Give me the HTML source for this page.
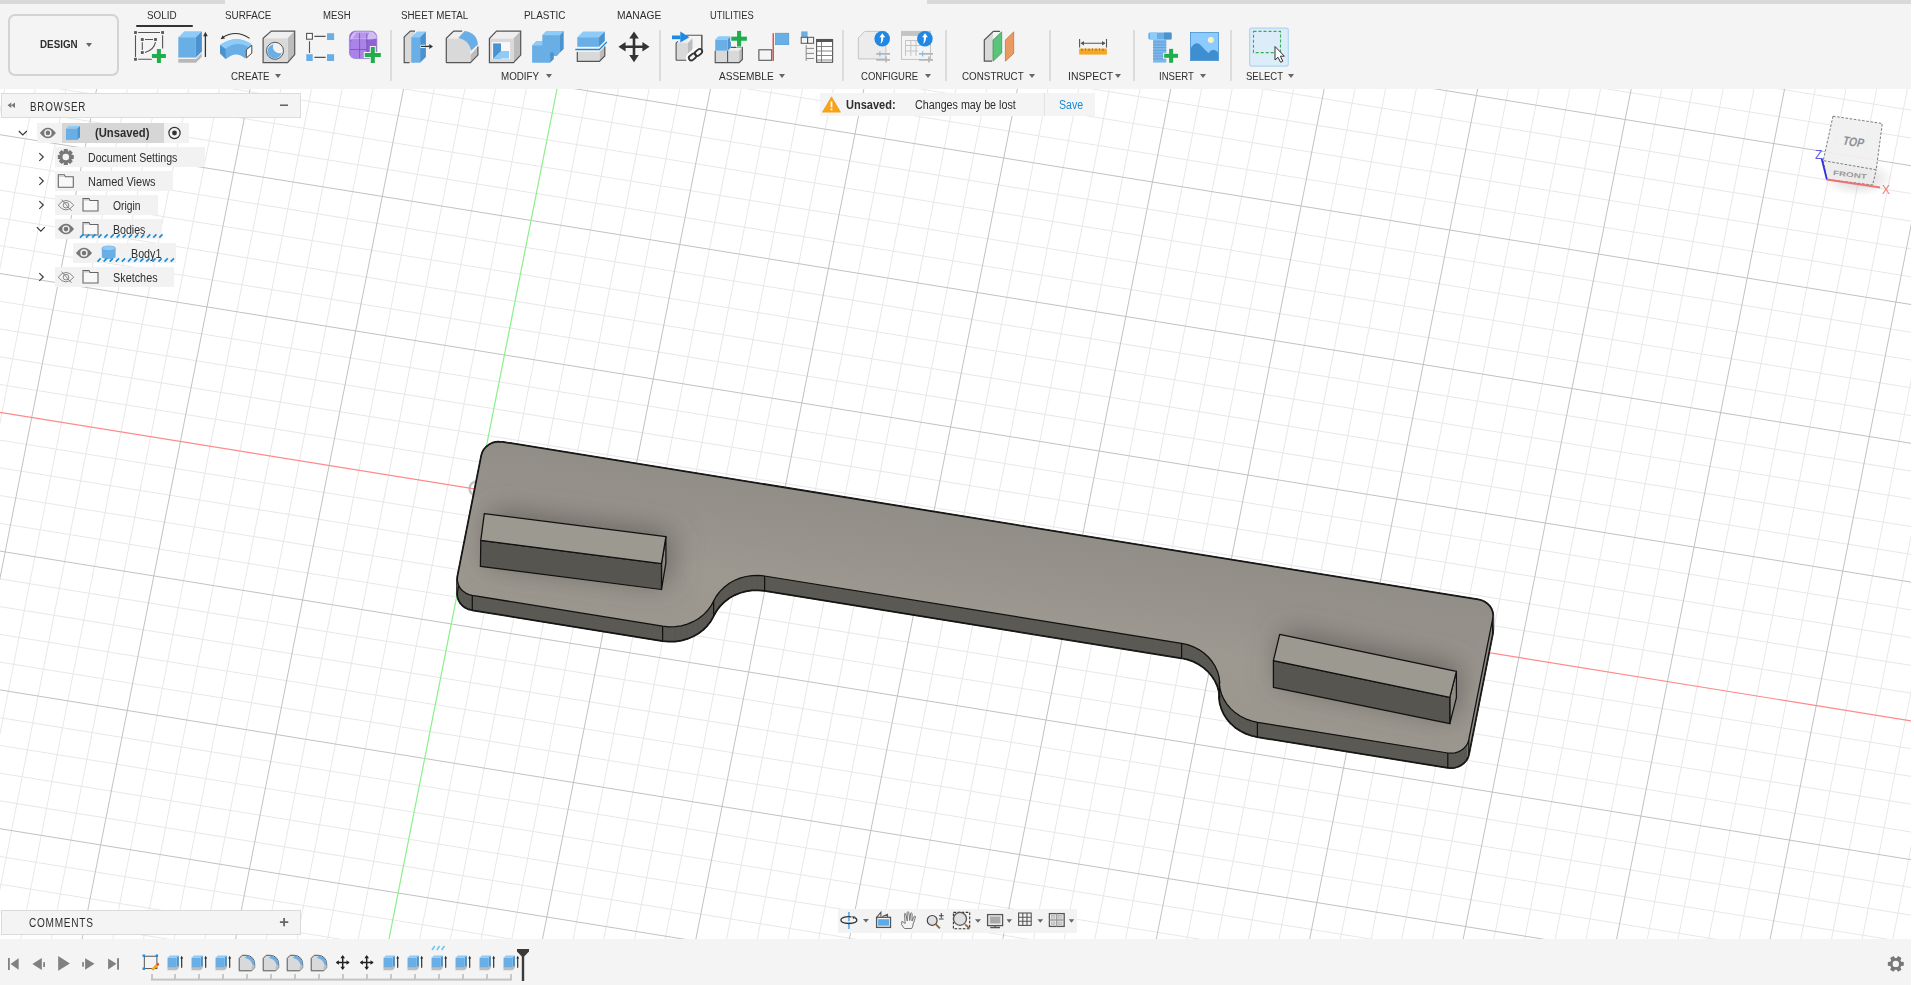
<!DOCTYPE html>
<html><head><meta charset="utf-8"><title>Fusion</title>
<style>
*{box-sizing:border-box;margin:0;padding:0}
html,body{width:1914px;height:985px;overflow:hidden;background:#fff;font-family:"Liberation Sans",sans-serif;color:#333;position:relative}
#vp{position:absolute;left:0;top:0;width:1911px;height:985px}
.abs{position:absolute}
.t{position:absolute;white-space:nowrap}
.tri{position:absolute;width:0;height:0;border-left:3px solid transparent;border-right:3px solid transparent;border-top:4px solid #666}
#topstrip1{left:0;top:0;width:225px;height:4px;background:#d9d9d9}
#topstrip2{left:927px;top:0;width:984px;height:4px;background:#d9d9d9}
#toolbar{left:0;top:0;width:1911px;height:89px;background:#f4f4f4}
#design{left:8.2px;top:14px;width:110.6px;height:61.6px;border:2px solid #d3d3d3;border-radius:7px}
#tabline{left:135.5px;top:25px;width:57px;height:2px;background:#333;border-radius:1px}
.sep{position:absolute;top:30px;width:2px;height:51px;background:#dcdcdc}
#brhead{left:1px;top:92.8px;width:300px;height:25px;background:#f4f4f4;border:1px solid #dcdcdc}
.row{position:absolute;height:19.5px;background:#f2f2f2}
#r1sel{left:62px;top:123.2px;width:102px;height:19.5px;background:#d6d6d6}
#unsaved{left:820px;top:93.3px;width:275px;height:23.2px;background:#f4f4f4}
#unsep{left:1044.3px;top:93.3px;width:1px;height:23.2px;background:#e2e2e2}
#comments{left:1px;top:910px;width:300px;height:24.5px;background:#f4f4f4;border:1px solid #dadada}
#nav{left:838px;top:909.2px;width:239px;height:23.4px;background:#f3f3f3}
#tl{left:0;top:939px;width:1911px;height:46px;background:#f4f4f4}

</style></head><body>
<div id="vp"><svg width="1911" height="985" viewBox="0 0 1911 985" style="position:absolute;left:0;top:0">
<defs>
<linearGradient id="topg" gradientUnits="userSpaceOnUse" x1="990.3" y1="520.9" x2="965.4" y2="675.1">
<stop offset="0" stop-color="#918e87"/><stop offset="0.35" stop-color="#98948d"/><stop offset="0.62" stop-color="#9d9991"/><stop offset="1" stop-color="#9b978f"/>
</linearGradient>
<linearGradient id="sideg" x1="0" y1="0" x2="0" y2="1">
<stop offset="0" stop-color="#5c5a54"/><stop offset="1" stop-color="#57554f"/>
</linearGradient>
<radialGradient id="ao" cx="0.5" cy="0.5" r="0.5">
<stop offset="0" stop-color="#76736c" stop-opacity="0.45"/><stop offset="1" stop-color="#6e6b65" stop-opacity="0"/>
</radialGradient>
<filter id="blur" x="-50%" y="-50%" width="200%" height="200%"><feGaussianBlur stdDeviation="15"/></filter>
<clipPath id="topclip"><path d="M481.5 455.4L482.5 452.3L484.1 449.4L486.3 446.9L489.0 444.8L492.1 443.2L495.5 442.2L499.0 441.9L502.6 442.1L1478.1 599.7L1481.5 600.5L1484.7 602.0L1487.5 604.0L1489.8 606.4L1491.5 609.2L1492.6 612.3L1493.0 615.5L1492.7 618.7L1468.8 739.7L1467.9 742.8L1466.2 745.7L1464.0 748.2L1461.3 750.3L1458.2 751.9L1454.9 752.9L1451.3 753.2L1447.8 753.0L1257.4 722.3L1251.4 720.9L1245.6 718.8L1240.1 716.0L1235.1 712.6L1230.7 708.6L1226.9 704.1L1223.8 699.2L1221.5 693.9L1219.9 688.5L1219.2 682.8L1219.8 682.8L1219.1 677.2L1217.6 671.7L1215.2 666.4L1212.1 661.5L1208.3 657.0L1203.9 653.0L1198.9 649.6L1193.5 646.8L1187.6 644.7L1181.6 643.4L764.6 576.0L758.4 575.4L752.1 575.6L745.9 576.5L739.9 578.1L734.2 580.5L729.0 583.5L724.2 587.2L720.0 591.4L716.4 596.0L713.6 601.1L713.6 601.1L710.8 606.2L707.3 610.8L703.1 615.1L698.3 618.7L693.0 621.7L687.3 624.1L681.3 625.8L675.1 626.7L668.8 626.8L662.6 626.2L472.3 595.4L468.9 594.6L465.7 593.1L462.9 591.1L460.6 588.7L458.9 585.9L457.8 582.8L457.3 579.6L457.6 576.4Z"/></clipPath>
<clipPath id="vclip"><rect x="0" y="89" width="1911" height="850"/></clipPath>
</defs>
<g clip-path="url(#vclip)">
<path d="M-26.1 89L-194.1 939M4.6 89L-163.4 939M35.3 89L-132.7 939M66.0 89L-102.0 939M127.3 89L-40.6 939M158.0 89L-9.9 939M188.7 89L20.8 939M219.4 89L51.4 939M280.8 89L112.8 939M311.5 89L143.5 939M342.2 89L174.2 939M372.9 89L204.9 939M434.2 89L266.3 939M464.9 89L297.0 939M495.6 89L327.7 939M526.3 89L358.3 939M587.7 89L419.7 939M618.4 89L450.4 939M649.1 89L481.1 939M679.8 89L511.8 939M741.1 89L573.2 939M771.8 89L603.9 939M802.5 89L634.6 939M833.2 89L665.2 939M894.6 89L726.6 939M925.3 89L757.3 939M956.0 89L788.0 939M986.7 89L818.7 939M1048.0 89L880.1 939M1078.7 89L910.8 939M1109.4 89L941.5 939M1140.1 89L972.2 939M1201.5 89L1033.5 939M1232.2 89L1064.2 939M1262.9 89L1094.9 939M1293.6 89L1125.6 939M1354.9 89L1187.0 939M1385.6 89L1217.7 939M1416.3 89L1248.4 939M1447.0 89L1279.0 939M1508.4 89L1340.4 939M1539.1 89L1371.1 939M1569.8 89L1401.8 939M1600.5 89L1432.5 939M1661.8 89L1493.9 939M1692.5 89L1524.6 939M1723.2 89L1555.3 939M1753.9 89L1586.0 939M1815.3 89L1647.3 939M1846.0 89L1678.0 939M1876.7 89L1708.7 939M1907.4 89L1739.4 939M1968.7 89L1800.8 939M1999.4 89L1831.5 939M2030.1 89L1862.2 939M2060.8 89L1892.9 939M2122.2 89L1954.2 939M0 995.3L1911 1303.9M0 939.7L1911 1248.4M0 912.0L1911 1220.6M0 884.2L1911 1192.8M0 856.5L1911 1165.1M0 800.9L1911 1109.6M0 773.2L1911 1081.8M0 745.4L1911 1054.0M0 717.7L1911 1026.3M0 662.1L1911 970.8M0 634.4L1911 943.0M0 606.6L1911 915.2M0 578.9L1911 887.5M0 523.3L1911 832.0M0 495.6L1911 804.2M0 467.8L1911 776.4M0 440.1L1911 748.7M0 384.5L1911 693.2M0 356.8L1911 665.4M0 329.0L1911 637.6M0 301.3L1911 609.9M0 245.7L1911 554.4M0 218.0L1911 526.6M0 190.2L1911 498.8M0 162.5L1911 471.1M0 106.9L1911 415.6M0 79.2L1911 387.8M0 51.4L1911 360.0M0 23.7L1911 332.3M0 -31.9L1911 276.8M0 -59.6L1911 249.0M0 -87.4L1911 221.2M0 -115.1L1911 193.5M0 -170.7L1911 138.0M0 -198.4L1911 110.2M0 -226.2L1911 82.4M0 -253.9L1911 54.7" stroke="#e8e8e8" stroke-width="1" fill="none"/>
<path d="M-56.8 89L-224.8 939M96.6 89L-71.3 939M250.1 89L82.1 939M403.5 89L235.6 939M710.5 89L542.5 939M863.9 89L695.9 939M1017.4 89L849.4 939M1170.8 89L1002.8 939M1324.2 89L1156.3 939M1477.7 89L1309.7 939M1631.2 89L1463.2 939M1784.6 89L1616.6 939M1938.0 89L1770.1 939M2091.5 89L1923.5 939M0 967.5L1911 1276.1M0 828.7L1911 1137.3M0 689.9L1911 998.5M0 551.1L1911 859.7M0 273.5L1911 582.1M0 134.7L1911 443.3M0 -4.1L1911 304.5M0 -142.9L1911 165.7" stroke="#c2c2c2" stroke-width="1" fill="none"/>
<circle cx="476.3" cy="488.5" r="6.8" fill="none" stroke="#c4c4c4" stroke-width="2.6"/>
<path d="M0 412.3L1911 720.9" stroke="#ff8a8a" stroke-width="1.2" fill="none"/>
<path d="M557 89L389.0 939" stroke="#8af08a" stroke-width="1.2" fill="none"/>
<path d="M481.5 455.4L482.5 452.3L482.5 466.9L481.5 470.0ZM482.5 452.3L484.1 449.4L484.1 464.0L482.5 466.9ZM484.1 449.4L486.3 446.9L486.3 461.5L484.1 464.0ZM486.3 446.9L489.0 444.8L489.0 459.4L486.3 461.5ZM489.0 444.8L492.1 443.2L492.1 457.8L489.0 459.4ZM492.1 443.2L495.5 442.2L495.5 456.8L492.1 457.8ZM495.5 442.2L499.0 441.9L499.0 456.5L495.5 456.8ZM499.0 441.9L502.6 442.1L502.6 456.7L499.0 456.5ZM502.6 442.1L1478.1 599.7L1478.1 614.3L502.6 456.7ZM1478.1 599.7L1481.5 600.5L1481.5 615.1L1478.1 614.3ZM1481.5 600.5L1484.7 602.0L1484.7 616.6L1481.5 615.1ZM1484.7 602.0L1487.5 604.0L1487.5 618.6L1484.7 616.6ZM1487.5 604.0L1489.8 606.4L1489.8 621.0L1487.5 618.6ZM1489.8 606.4L1491.5 609.2L1491.5 623.8L1489.8 621.0ZM1491.5 609.2L1492.6 612.3L1492.6 626.9L1491.5 623.8ZM1492.6 612.3L1493.0 615.5L1493.0 630.1L1492.6 626.9ZM1493.0 615.5L1492.7 618.7L1492.7 633.3L1493.0 630.1ZM1492.7 618.7L1468.8 739.7L1468.8 754.3L1492.7 633.3ZM1468.8 739.7L1467.9 742.8L1467.9 757.4L1468.8 754.3ZM1467.9 742.8L1466.2 745.7L1466.2 760.3L1467.9 757.4ZM1466.2 745.7L1464.0 748.2L1464.0 762.8L1466.2 760.3ZM1464.0 748.2L1461.3 750.3L1461.3 764.9L1464.0 762.8ZM1461.3 750.3L1458.2 751.9L1458.2 766.5L1461.3 764.9ZM1458.2 751.9L1454.9 752.9L1454.9 767.5L1458.2 766.5ZM1454.9 752.9L1451.3 753.2L1451.3 767.8L1454.9 767.5ZM1451.3 753.2L1447.8 753.0L1447.8 767.6L1451.3 767.8ZM1447.8 753.0L1257.4 722.3L1257.4 736.9L1447.8 767.6ZM1257.4 722.3L1251.4 720.9L1251.4 735.5L1257.4 736.9ZM1251.4 720.9L1245.6 718.8L1245.6 733.4L1251.4 735.5ZM1245.6 718.8L1240.1 716.0L1240.1 730.6L1245.6 733.4ZM1240.1 716.0L1235.1 712.6L1235.1 727.2L1240.1 730.6ZM1235.1 712.6L1230.7 708.6L1230.7 723.2L1235.1 727.2ZM1230.7 708.6L1226.9 704.1L1226.9 718.7L1230.7 723.2ZM1226.9 704.1L1223.8 699.2L1223.8 713.8L1226.9 718.7ZM1223.8 699.2L1221.5 693.9L1221.5 708.5L1223.8 713.8ZM1221.5 693.9L1219.9 688.5L1219.9 703.1L1221.5 708.5ZM1219.9 688.5L1219.2 682.8L1219.2 697.4L1219.9 703.1ZM1219.2 682.8L1219.8 682.8L1219.8 697.4L1219.2 697.4ZM1219.8 682.8L1219.1 677.2L1219.1 691.8L1219.8 697.4ZM1219.1 677.2L1217.6 671.7L1217.6 686.3L1219.1 691.8ZM1217.6 671.7L1215.2 666.4L1215.2 681.0L1217.6 686.3ZM1215.2 666.4L1212.1 661.5L1212.1 676.1L1215.2 681.0ZM1212.1 661.5L1208.3 657.0L1208.3 671.6L1212.1 676.1ZM1208.3 657.0L1203.9 653.0L1203.9 667.6L1208.3 671.6ZM1203.9 653.0L1198.9 649.6L1198.9 664.2L1203.9 667.6ZM1198.9 649.6L1193.5 646.8L1193.5 661.4L1198.9 664.2ZM1193.5 646.8L1187.6 644.7L1187.6 659.3L1193.5 661.4ZM1187.6 644.7L1181.6 643.4L1181.6 658.0L1187.6 659.3ZM1181.6 643.4L764.6 576.0L764.6 590.6L1181.6 658.0ZM764.6 576.0L758.4 575.4L758.4 590.0L764.6 590.6ZM758.4 575.4L752.1 575.6L752.1 590.2L758.4 590.0ZM752.1 575.6L745.9 576.5L745.9 591.1L752.1 590.2ZM745.9 576.5L739.9 578.1L739.9 592.7L745.9 591.1ZM739.9 578.1L734.2 580.5L734.2 595.1L739.9 592.7ZM734.2 580.5L729.0 583.5L729.0 598.1L734.2 595.1ZM729.0 583.5L724.2 587.2L724.2 601.8L729.0 598.1ZM724.2 587.2L720.0 591.4L720.0 606.0L724.2 601.8ZM720.0 591.4L716.4 596.0L716.4 610.6L720.0 606.0ZM716.4 596.0L713.6 601.1L713.6 615.7L716.4 610.6ZM713.6 601.1L713.6 601.1L713.6 615.7L713.6 615.7ZM713.6 601.1L710.8 606.2L710.8 620.8L713.6 615.7ZM710.8 606.2L707.3 610.8L707.3 625.4L710.8 620.8ZM707.3 610.8L703.1 615.1L703.1 629.7L707.3 625.4ZM703.1 615.1L698.3 618.7L698.3 633.3L703.1 629.7ZM698.3 618.7L693.0 621.7L693.0 636.3L698.3 633.3ZM693.0 621.7L687.3 624.1L687.3 638.7L693.0 636.3ZM687.3 624.1L681.3 625.8L681.3 640.4L687.3 638.7ZM681.3 625.8L675.1 626.7L675.1 641.3L681.3 640.4ZM675.1 626.7L668.8 626.8L668.8 641.4L675.1 641.3ZM668.8 626.8L662.6 626.2L662.6 640.8L668.8 641.4ZM662.6 626.2L472.3 595.4L472.3 610.0L662.6 640.8ZM472.3 595.4L468.9 594.6L468.9 609.2L472.3 610.0ZM468.9 594.6L465.7 593.1L465.7 607.7L468.9 609.2ZM465.7 593.1L462.9 591.1L462.9 605.7L465.7 607.7ZM462.9 591.1L460.6 588.7L460.6 603.3L462.9 605.7ZM460.6 588.7L458.9 585.9L458.9 600.5L460.6 603.3ZM458.9 585.9L457.8 582.8L457.8 597.4L458.9 600.5ZM457.8 582.8L457.3 579.6L457.3 594.2L457.8 597.4ZM457.3 579.6L457.6 576.4L457.6 591.0L457.3 594.2ZM457.6 576.4L481.5 455.4L481.5 470.0L457.6 591.0Z" fill="#111" stroke="#111" stroke-width="2.3" stroke-linejoin="round"/>
<path d="M481.5 455.4L482.5 452.3L482.5 466.9L481.5 470.0ZM482.5 452.3L484.1 449.4L484.1 464.0L482.5 466.9ZM484.1 449.4L486.3 446.9L486.3 461.5L484.1 464.0ZM486.3 446.9L489.0 444.8L489.0 459.4L486.3 461.5ZM489.0 444.8L492.1 443.2L492.1 457.8L489.0 459.4ZM492.1 443.2L495.5 442.2L495.5 456.8L492.1 457.8ZM495.5 442.2L499.0 441.9L499.0 456.5L495.5 456.8ZM499.0 441.9L502.6 442.1L502.6 456.7L499.0 456.5ZM502.6 442.1L1478.1 599.7L1478.1 614.3L502.6 456.7ZM1478.1 599.7L1481.5 600.5L1481.5 615.1L1478.1 614.3ZM1481.5 600.5L1484.7 602.0L1484.7 616.6L1481.5 615.1ZM1484.7 602.0L1487.5 604.0L1487.5 618.6L1484.7 616.6ZM1487.5 604.0L1489.8 606.4L1489.8 621.0L1487.5 618.6ZM1489.8 606.4L1491.5 609.2L1491.5 623.8L1489.8 621.0ZM1491.5 609.2L1492.6 612.3L1492.6 626.9L1491.5 623.8ZM1492.6 612.3L1493.0 615.5L1493.0 630.1L1492.6 626.9ZM1467.9 742.8L1466.2 745.7L1466.2 760.3L1467.9 757.4ZM1466.2 745.7L1464.0 748.2L1464.0 762.8L1466.2 760.3ZM1464.0 748.2L1461.3 750.3L1461.3 764.9L1464.0 762.8ZM1461.3 750.3L1458.2 751.9L1458.2 766.5L1461.3 764.9ZM1458.2 751.9L1454.9 752.9L1454.9 767.5L1458.2 766.5ZM1454.9 752.9L1451.3 753.2L1451.3 767.8L1454.9 767.5ZM1451.3 753.2L1447.8 753.0L1447.8 767.6L1451.3 767.8ZM1447.8 753.0L1257.4 722.3L1257.4 736.9L1447.8 767.6ZM1257.4 722.3L1251.4 720.9L1251.4 735.5L1257.4 736.9ZM1251.4 720.9L1245.6 718.8L1245.6 733.4L1251.4 735.5ZM1245.6 718.8L1240.1 716.0L1240.1 730.6L1245.6 733.4ZM1240.1 716.0L1235.1 712.6L1235.1 727.2L1240.1 730.6ZM1235.1 712.6L1230.7 708.6L1230.7 723.2L1235.1 727.2ZM1230.7 708.6L1226.9 704.1L1226.9 718.7L1230.7 723.2ZM1226.9 704.1L1223.8 699.2L1223.8 713.8L1226.9 718.7ZM1223.8 699.2L1221.5 693.9L1221.5 708.5L1223.8 713.8ZM1221.5 693.9L1219.9 688.5L1219.9 703.1L1221.5 708.5ZM1219.9 688.5L1219.2 682.8L1219.2 697.4L1219.9 703.1ZM1219.2 682.8L1219.8 682.8L1219.8 697.4L1219.2 697.4ZM1219.8 682.8L1219.1 677.2L1219.1 691.8L1219.8 697.4ZM1219.1 677.2L1217.6 671.7L1217.6 686.3L1219.1 691.8ZM1217.6 671.7L1215.2 666.4L1215.2 681.0L1217.6 686.3ZM1215.2 666.4L1212.1 661.5L1212.1 676.1L1215.2 681.0ZM1212.1 661.5L1208.3 657.0L1208.3 671.6L1212.1 676.1ZM1208.3 657.0L1203.9 653.0L1203.9 667.6L1208.3 671.6ZM1203.9 653.0L1198.9 649.6L1198.9 664.2L1203.9 667.6ZM1198.9 649.6L1193.5 646.8L1193.5 661.4L1198.9 664.2ZM1193.5 646.8L1187.6 644.7L1187.6 659.3L1193.5 661.4ZM1187.6 644.7L1181.6 643.4L1181.6 658.0L1187.6 659.3ZM1181.6 643.4L764.6 576.0L764.6 590.6L1181.6 658.0ZM764.6 576.0L758.4 575.4L758.4 590.0L764.6 590.6ZM758.4 575.4L752.1 575.6L752.1 590.2L758.4 590.0ZM752.1 575.6L745.9 576.5L745.9 591.1L752.1 590.2ZM745.9 576.5L739.9 578.1L739.9 592.7L745.9 591.1ZM739.9 578.1L734.2 580.5L734.2 595.1L739.9 592.7ZM734.2 580.5L729.0 583.5L729.0 598.1L734.2 595.1ZM729.0 583.5L724.2 587.2L724.2 601.8L729.0 598.1ZM724.2 587.2L720.0 591.4L720.0 606.0L724.2 601.8ZM720.0 591.4L716.4 596.0L716.4 610.6L720.0 606.0ZM716.4 596.0L713.6 601.1L713.6 615.7L716.4 610.6ZM713.6 601.1L713.6 601.1L713.6 615.7L713.6 615.7ZM713.6 601.1L710.8 606.2L710.8 620.8L713.6 615.7ZM710.8 606.2L707.3 610.8L707.3 625.4L710.8 620.8ZM707.3 610.8L703.1 615.1L703.1 629.7L707.3 625.4ZM703.1 615.1L698.3 618.7L698.3 633.3L703.1 629.7ZM698.3 618.7L693.0 621.7L693.0 636.3L698.3 633.3ZM693.0 621.7L687.3 624.1L687.3 638.7L693.0 636.3ZM687.3 624.1L681.3 625.8L681.3 640.4L687.3 638.7ZM681.3 625.8L675.1 626.7L675.1 641.3L681.3 640.4ZM675.1 626.7L668.8 626.8L668.8 641.4L675.1 641.3ZM668.8 626.8L662.6 626.2L662.6 640.8L668.8 641.4ZM662.6 626.2L472.3 595.4L472.3 610.0L662.6 640.8ZM472.3 595.4L468.9 594.6L468.9 609.2L472.3 610.0ZM468.9 594.6L465.7 593.1L465.7 607.7L468.9 609.2ZM465.7 593.1L462.9 591.1L462.9 605.7L465.7 607.7ZM462.9 591.1L460.6 588.7L460.6 603.3L462.9 605.7ZM460.6 588.7L458.9 585.9L458.9 600.5L460.6 603.3ZM458.9 585.9L457.8 582.8L457.8 597.4L458.9 600.5ZM457.8 582.8L457.3 579.6L457.3 594.2L457.8 597.4ZM457.3 579.6L457.6 576.4L457.6 591.0L457.3 594.2ZM457.6 576.4L481.5 455.4L481.5 470.0L457.6 591.0Z" fill="#5b5953" stroke="#5b5953" stroke-width="0.8"/>
<path d="M1493.0 615.5L1492.7 618.7L1492.7 633.3L1493.0 630.1ZM1492.7 618.7L1468.8 739.7L1468.8 754.3L1492.7 633.3ZM1468.8 739.7L1467.9 742.8L1467.9 757.4L1468.8 754.3Z" fill="#8e8b84" stroke="#8e8b84" stroke-width="0.8"/>
<path d="M481.5 470.0L482.5 466.9L484.1 464.0L486.3 461.5L489.0 459.4L492.1 457.8L495.5 456.8L499.0 456.5L502.6 456.7L1478.1 614.3L1481.5 615.1L1484.7 616.6L1487.5 618.6L1489.8 621.0L1491.5 623.8L1492.6 626.9L1493.0 630.1L1492.7 633.3L1468.8 754.3L1467.9 757.4L1466.2 760.3L1464.0 762.8L1461.3 764.9L1458.2 766.5L1454.9 767.5L1451.3 767.8L1447.8 767.6L1257.4 736.9L1251.4 735.5L1245.6 733.4L1240.1 730.6L1235.1 727.2L1230.7 723.2L1226.9 718.7L1223.8 713.8L1221.5 708.5L1219.9 703.1L1219.2 697.4L1219.8 697.4L1219.1 691.8L1217.6 686.3L1215.2 681.0L1212.1 676.1L1208.3 671.6L1203.9 667.6L1198.9 664.2L1193.5 661.4L1187.6 659.3L1181.6 658.0L764.6 590.6L758.4 590.0L752.1 590.2L745.9 591.1L739.9 592.7L734.2 595.1L729.0 598.1L724.2 601.8L720.0 606.0L716.4 610.6L713.6 615.7L713.6 615.7L710.8 620.8L707.3 625.4L703.1 629.7L698.3 633.3L693.0 636.3L687.3 638.7L681.3 640.4L675.1 641.3L668.8 641.4L662.6 640.8L472.3 610.0L468.9 609.2L465.7 607.7L462.9 605.7L460.6 603.3L458.9 600.5L457.8 597.4L457.3 594.2L457.6 591.0Z" fill="none" stroke="#111" stroke-width="1.2"/>
<path d="M481.5 455.4L482.5 452.3L484.1 449.4L486.3 446.9L489.0 444.8L492.1 443.2L495.5 442.2L499.0 441.9L502.6 442.1L1478.1 599.7L1481.5 600.5L1484.7 602.0L1487.5 604.0L1489.8 606.4L1491.5 609.2L1492.6 612.3L1493.0 615.5L1492.7 618.7L1468.8 739.7L1467.9 742.8L1466.2 745.7L1464.0 748.2L1461.3 750.3L1458.2 751.9L1454.9 752.9L1451.3 753.2L1447.8 753.0L1257.4 722.3L1251.4 720.9L1245.6 718.8L1240.1 716.0L1235.1 712.6L1230.7 708.6L1226.9 704.1L1223.8 699.2L1221.5 693.9L1219.9 688.5L1219.2 682.8L1219.8 682.8L1219.1 677.2L1217.6 671.7L1215.2 666.4L1212.1 661.5L1208.3 657.0L1203.9 653.0L1198.9 649.6L1193.5 646.8L1187.6 644.7L1181.6 643.4L764.6 576.0L758.4 575.4L752.1 575.6L745.9 576.5L739.9 578.1L734.2 580.5L729.0 583.5L724.2 587.2L720.0 591.4L716.4 596.0L713.6 601.1L713.6 601.1L710.8 606.2L707.3 610.8L703.1 615.1L698.3 618.7L693.0 621.7L687.3 624.1L681.3 625.8L675.1 626.7L668.8 626.8L662.6 626.2L472.3 595.4L468.9 594.6L465.7 593.1L462.9 591.1L460.6 588.7L458.9 585.9L457.8 582.8L457.3 579.6L457.6 576.4Z" fill="url(#topg)"/>
<g clip-path="url(#topclip)"><g filter="url(#blur)" fill="#55524c" fill-opacity="0.75"><path d="M490 510L672 533L668 585L485 562Z"/><path d="M1283 630L1462 667L1456 718L1278 682Z"/></g></g>
<path d="M481.5 455.4L482.5 452.3L484.1 449.4L486.3 446.9L489.0 444.8L492.1 443.2L495.5 442.2L499.0 441.9L502.6 442.1L1478.1 599.7L1481.5 600.5L1484.7 602.0L1487.5 604.0L1489.8 606.4L1491.5 609.2L1492.6 612.3L1493.0 615.5L1492.7 618.7L1468.8 739.7L1467.9 742.8L1466.2 745.7L1464.0 748.2L1461.3 750.3L1458.2 751.9L1454.9 752.9L1451.3 753.2L1447.8 753.0L1257.4 722.3L1251.4 720.9L1245.6 718.8L1240.1 716.0L1235.1 712.6L1230.7 708.6L1226.9 704.1L1223.8 699.2L1221.5 693.9L1219.9 688.5L1219.2 682.8L1219.8 682.8L1219.1 677.2L1217.6 671.7L1215.2 666.4L1212.1 661.5L1208.3 657.0L1203.9 653.0L1198.9 649.6L1193.5 646.8L1187.6 644.7L1181.6 643.4L764.6 576.0L758.4 575.4L752.1 575.6L745.9 576.5L739.9 578.1L734.2 580.5L729.0 583.5L724.2 587.2L720.0 591.4L716.4 596.0L713.6 601.1L713.6 601.1L710.8 606.2L707.3 610.8L703.1 615.1L698.3 618.7L693.0 621.7L687.3 624.1L681.3 625.8L675.1 626.7L668.8 626.8L662.6 626.2L472.3 595.4L468.9 594.6L465.7 593.1L462.9 591.1L460.6 588.7L458.9 585.9L457.8 582.8L457.3 579.6L457.6 576.4Z" fill="none" stroke="#111" stroke-width="1.25" stroke-linejoin="round"/>
<path d="M472.3 595.4V610.0" stroke="#111" stroke-width="1.2"/>
<path d="M662.6 626.2V640.8" stroke="#111" stroke-width="1.2"/>
<path d="M713.6 601.1V615.7" stroke="#111" stroke-width="1.2"/>
<path d="M764.6 576.0V590.6" stroke="#111" stroke-width="1.2"/>
<path d="M1181.6 643.4V658.0" stroke="#111" stroke-width="1.2"/>
<path d="M1219.5 682.8V697.4" stroke="#111" stroke-width="1.2"/>
<path d="M1257.4 722.3V736.9" stroke="#111" stroke-width="1.2"/>
<path d="M1447.8 753.0V767.6" stroke="#111" stroke-width="1.2"/>
<path d="M1468.8 739.7V754.3" stroke="#111" stroke-width="1.2"/>
<path d="M1492.7 618.7V633.3" stroke="#111" stroke-width="1.2"/>
<path d="M661.5 563.7L665.9 536.6L665.9 562.6L661.5 589.5Z" fill="#8a877f" stroke="#111" stroke-width="1.25" stroke-linejoin="round"/>
<path d="M480.8 540.3L661.5 563.7L661.5 589.5L480.4 566.4Z" fill="#56554f" stroke="#111" stroke-width="1.25" stroke-linejoin="round"/>
<path d="M484.3 513.6L665.9 536.6L661.5 563.7L480.8 540.3Z" fill="#9c9991" stroke="#111" stroke-width="1.25" stroke-linejoin="round"/>
<path d="M1449.8 697.4L1456.4 671.3L1456.4 697.6L1449.8 723.7Z" fill="#8e8b83" stroke="#111" stroke-width="1.25" stroke-linejoin="round"/>
<path d="M1273.4 660.7L1449.8 697.4L1449.8 723.7L1273.4 687.3Z" fill="#56554f" stroke="#111" stroke-width="1.25" stroke-linejoin="round"/>
<path d="M1279.7 634.3L1456.4 671.3L1449.8 697.4L1273.4 660.7Z" fill="#9c9991" stroke="#111" stroke-width="1.25" stroke-linejoin="round"/>
</g>
</svg></div>

<div class="abs" id="toolbar"></div>
<div class="abs" id="topstrip1"></div>
<div class="abs" id="topstrip2"></div>
<div class="abs" id="design"></div>
<div class="abs" id="tabline"></div>
<div class="sep" style="left:390px"></div>
<div class="sep" style="left:659px"></div>
<div class="sep" style="left:842px"></div>
<div class="sep" style="left:945px"></div>
<div class="sep" style="left:1049px"></div>
<div class="sep" style="left:1133px"></div>
<div class="sep" style="left:1230px"></div>
<div class="t" style="left:147.2px;top:9.44px;font-size:11.63px;line-height:11.63px;color:#2e2e2e;transform:scaleX(0.848);transform-origin:0 0;">SOLID</div>
<div class="t" style="left:225.2px;top:9.44px;font-size:11.63px;line-height:11.63px;color:#2e2e2e;transform:scaleX(0.845);transform-origin:0 0;">SURFACE</div>
<div class="t" style="left:323.0px;top:9.44px;font-size:11.63px;line-height:11.63px;color:#2e2e2e;transform:scaleX(0.822);transform-origin:0 0;">MESH</div>
<div class="t" style="left:401.3px;top:9.44px;font-size:11.63px;line-height:11.63px;color:#2e2e2e;transform:scaleX(0.843);transform-origin:0 0;">SHEET METAL</div>
<div class="t" style="left:524.2px;top:9.44px;font-size:11.63px;line-height:11.63px;color:#2e2e2e;transform:scaleX(0.854);transform-origin:0 0;">PLASTIC</div>
<div class="t" style="left:617.0px;top:9.44px;font-size:11.63px;line-height:11.63px;color:#2e2e2e;transform:scaleX(0.881);transform-origin:0 0;">MANAGE</div>
<div class="t" style="left:710.0px;top:9.44px;font-size:11.63px;line-height:11.63px;color:#2e2e2e;transform:scaleX(0.805);transform-origin:0 0;">UTILITIES</div>
<div class="t" style="left:231.0px;top:70.89px;font-size:11.34px;line-height:11.34px;color:#2e2e2e;transform:scaleX(0.855);transform-origin:0 0;">CREATE</div>
<div class="tri" style="left:274.6px;top:73.5px"></div>
<div class="t" style="left:501.4px;top:70.89px;font-size:11.34px;line-height:11.34px;color:#2e2e2e;transform:scaleX(0.864);transform-origin:0 0;">MODIFY</div>
<div class="tri" style="left:545.5px;top:73.5px"></div>
<div class="t" style="left:719.0px;top:70.89px;font-size:11.34px;line-height:11.34px;color:#2e2e2e;transform:scaleX(0.895);transform-origin:0 0;">ASSEMBLE</div>
<div class="tri" style="left:778.7px;top:73.5px"></div>
<div class="t" style="left:861.3px;top:70.89px;font-size:11.34px;line-height:11.34px;color:#2e2e2e;transform:scaleX(0.841);transform-origin:0 0;">CONFIGURE</div>
<div class="tri" style="left:925.3px;top:73.5px"></div>
<div class="t" style="left:962.1px;top:70.89px;font-size:11.34px;line-height:11.34px;color:#2e2e2e;transform:scaleX(0.867);transform-origin:0 0;">CONSTRUCT</div>
<div class="tri" style="left:1029.0px;top:73.5px"></div>
<div class="t" style="left:1068.2px;top:70.89px;font-size:11.34px;line-height:11.34px;color:#2e2e2e;transform:scaleX(0.920);transform-origin:0 0;">INSPECT</div>
<div class="tri" style="left:1115.4px;top:73.5px"></div>
<div class="t" style="left:1159.0px;top:70.89px;font-size:11.34px;line-height:11.34px;color:#2e2e2e;transform:scaleX(0.846);transform-origin:0 0;">INSERT</div>
<div class="tri" style="left:1200.4px;top:73.5px"></div>
<div class="t" style="left:1246.3px;top:70.89px;font-size:11.34px;line-height:11.34px;color:#2e2e2e;transform:scaleX(0.841);transform-origin:0 0;">SELECT</div>
<div class="tri" style="left:1288.4px;top:73.5px"></div>
<div class="t" style="left:40.1px;top:39.13px;font-size:11.05px;line-height:11.05px;color:#2e2e2e;font-weight:bold;transform:scaleX(0.888);transform-origin:0 0;">DESIGN</div>
<div class="tri" style="left:86px;top:43px"></div>
<div class="abs" id="brhead"></div>
<div class="row" style="left:37.1px;top:123.2px;width:151.6px"></div>
<div class="abs" id="r1sel"></div>
<div class="row" style="left:55px;top:147px;width:149.7px"></div>
<div class="row" style="left:55px;top:171px;width:117.7px"></div>
<div class="row" style="left:55px;top:195px;width:102.8px"></div>
<div class="row" style="left:55px;top:219px;width:107px"></div>
<div class="row" style="left:73px;top:243px;width:103px"></div>
<div class="row" style="left:55px;top:267px;width:118.8px"></div>
<div class="abs" id="unsaved"></div>
<div class="abs" id="unsep"></div>
<div class="abs" id="comments"></div>
<div class="abs" id="nav"></div>
<div class="abs" id="tl"></div>
<div class="t" style="left:29.9px;top:100.60px;font-size:12.50px;line-height:12.50px;color:#2e2e2e;transform:scaleX(0.785);transform-origin:0 0;letter-spacing:1.0px;">BROWSER</div>
<div class="t" style="left:95.3px;top:127.40px;font-size:12.50px;line-height:12.50px;color:#2e2e2e;font-weight:bold;transform:scaleX(0.900);transform-origin:0 0;">(Unsaved)</div>
<div class="t" style="left:88.0px;top:151.75px;font-size:12.21px;line-height:12.21px;color:#2e2e2e;transform:scaleX(0.867);transform-origin:0 0;">Document Settings</div>
<div class="t" style="left:88.0px;top:175.75px;font-size:12.21px;line-height:12.21px;color:#2e2e2e;transform:scaleX(0.900);transform-origin:0 0;">Named Views</div>
<div class="t" style="left:113.2px;top:199.75px;font-size:12.21px;line-height:12.21px;color:#2e2e2e;transform:scaleX(0.844);transform-origin:0 0;">Origin</div>
<div class="t" style="left:113.2px;top:223.75px;font-size:12.21px;line-height:12.21px;color:#2e2e2e;transform:scaleX(0.868);transform-origin:0 0;">Bodies</div>
<div class="t" style="left:131.0px;top:247.75px;font-size:12.21px;line-height:12.21px;color:#2e2e2e;transform:scaleX(0.878);transform-origin:0 0;">Body1</div>
<div class="t" style="left:113.2px;top:271.75px;font-size:12.21px;line-height:12.21px;color:#2e2e2e;transform:scaleX(0.888);transform-origin:0 0;">Sketches</div>
<div class="t" style="left:29.2px;top:917.40px;font-size:12.50px;line-height:12.50px;color:#2e2e2e;transform:scaleX(0.807);transform-origin:0 0;letter-spacing:0.9px;">COMMENTS</div>
<div class="t" style="left:845.6px;top:98.60px;font-size:12.50px;line-height:12.50px;color:#2e2e2e;font-weight:bold;transform:scaleX(0.881);transform-origin:0 0;">Unsaved:</div>
<div class="t" style="left:915.3px;top:98.60px;font-size:12.50px;line-height:12.50px;color:#2e2e2e;transform:scaleX(0.858);transform-origin:0 0;">Changes may be lost</div>
<div class="t" style="left:1058.5px;top:98.60px;font-size:12.50px;line-height:12.50px;color:#1a8ad4;transform:scaleX(0.849);transform-origin:0 0;">Save</div>
<svg class="abs" style="left:0;top:0" width="1914" height="985" viewBox="0 0 1914 985">
<rect x="134.1" y="31.1" width="2.8" height="2.8" fill="#555" />
<rect x="161.2" y="31.1" width="2.8" height="2.8" fill="#555" />
<rect x="134.1" y="57.9" width="2.8" height="2.8" fill="#555" />
<rect x="140.9" y="38.1" width="2.8" height="2.8" fill="#555" />
<rect x="154.1" y="38.1" width="2.8" height="2.8" fill="#555" />
<rect x="140.9" y="51.1" width="2.8" height="2.8" fill="#555" />
<path d="M138.2 32.5H160M135.5 35.2V57M162.6 35.2V48.5M138.2 59.3H152M145 39.5H153M142.3 42.2V50" fill="none" stroke="#555" stroke-width="1.1" />
<path d="M155.5 42.2Q154 50 145 52.5" fill="none" stroke="#555" stroke-width="1.1" />
<rect x="150.9" y="53.0" width="16" height="6" fill="#f4f4f4" /><rect x="155.9" y="48.0" width="6" height="16" fill="#f4f4f4" /><rect x="151.9" y="54.0" width="14" height="4" fill="#1fae4b" /><rect x="156.9" y="49.0" width="4" height="14" fill="#1fae4b" />
<path d="M178.3 59H195.9L201.7 53V57L195.9 62.7H178.3Z" fill="#b8b8b8" />
<path d="M178.3 37.2L184.3 31.200000000000003L201.9 31.200000000000003L195.9 37.2Z" fill="#8ecbf8" /><path d="M195.9 37.2L201.9 31.200000000000003L201.9 51.6L195.9 57.6Z" fill="#4a93cf" /><rect x="178.3" y="37.2" width="17.6" height="20.4" fill="#6aaee6" />
<path d="M205.4 57V35" fill="none" stroke="#333" stroke-width="1.3" />
<path d="M203.1 36.2L205.4 31.8L207.8 36.2Z" fill="#333" />
<path d="M249.6 38.4Q236 29 222.5 37.6" fill="none" stroke="#333" stroke-width="1.1" />
<path d="M220.6 39.2L222.7 35.2L225.0 38.6Z" fill="#333" />
<path d="M220 45Q236 34 251.3 44L245 58.6Q236 50 225.8 59.3Z" fill="#6aaee6" />
<path d="M220 45Q236 34 251.3 44L249 47Q236 40 225.5 49Z" fill="#8ecbf8" />
<path d="M220 45L225.5 49L225.8 59.3L220 53.5Z" fill="#4a93cf" />
<path d="M246.3 49.8L251.8 45.2V53.2L246.3 58Z" fill="#fff" stroke="#444" stroke-width="1" />
<path d="M263.1 38.3L271.3 31.1H294.7L287.6 38.3Z" fill="#efefef" />
<path d="M287.6 38.3L294.7 31.1V54.6L287.6 62.7Z" fill="#bcbcbc" />
<rect x="263.1" y="38.3" width="24.5" height="24.4" fill="#d9d9d9" />
<path d="M263.1 62.7V38.3L271.3 31.1H294.7V54.6L287.6 62.7Z" fill="none" stroke="#555" stroke-width="1.2" />
<circle cx="275" cy="50.8" r="8.5" fill="#f2f2f2" stroke="#555" stroke-width="1"/>
<path d="M273.5 44.2A7.2 7.2 0 1 0 281.8 52.8A6.5 6.5 0 0 1 273.5 44.2Z" fill="#6aaee6" />
<rect x="306.6" y="33.4" width="5.8" height="5.8" fill="#fff" stroke="#555" stroke-width="1.1" />
<rect x="327" y="33.2" width="7.1" height="6.8" fill="#6aaee6" />
<rect x="306.3" y="54.2" width="6.4" height="6.8" fill="#6aaee6" />
<rect x="327" y="54.2" width="7.1" height="6.8" fill="#6aaee6" />
<path d="M314.4 36.4H325.6M309.5 41.3V52.9M314.4 57.4H325.6" fill="none" stroke="#555" stroke-width="1.1" />
<rect x="349.4" y="31.1" width="27.5" height="27.5" rx="6" fill="#8f62d6" stroke="#9b86c0" stroke-width="0.7"/>
<path d="M350 40Q350.5 33 356 31.5H370Q376.5 31.8 376.8 38.5Q373 39.5 366.8 39.6H350Z" fill="#d2bcf6" />
<path d="M356.5 32.5H369.5L366.5 38.5H352.5Z" fill="#b994f0" />
<rect x="350.3" y="39.6" width="16.6" height="18.7" rx="4" fill="#aa82e9"/>
<path d="M359.6 33V58.2M350.3 49.5H366.9M366.8 33.5L367 58" fill="none" stroke="#7552b0" stroke-width="0.8" />
<rect x="363.8" y="52.0" width="18" height="6" fill="#f4f4f4" /><rect x="369.8" y="46.0" width="6" height="18" fill="#f4f4f4" /><rect x="364.8" y="53.0" width="16" height="4" fill="#1fae4b" /><rect x="370.8" y="47.0" width="4" height="16" fill="#1fae4b" />
<path d="M404.2 62.7V36.9L410.3 31.1H415V62.7Z" fill="#d9d9d9" />
<path d="M409.5 62.7H404.2V36.9L410.3 31.1H415" fill="none" stroke="#555" stroke-width="1.2" />
<path d="M411.3 37.2L417.1 31.400000000000002L425.90000000000003 31.400000000000002L420.1 37.2Z" fill="#8ecbf8" /><path d="M420.1 37.2L425.90000000000003 31.400000000000002L425.90000000000003 56.900000000000006L420.1 62.7Z" fill="#4a93cf" /><rect x="411.3" y="37.2" width="8.8" height="25.5" fill="#6aaee6" />
<rect x="420.5" y="44.8" width="5" height="3.2" fill="#fff" />
<path d="M421 46.4H429.8" fill="none" stroke="#333" stroke-width="1.3" />
<path d="M429.3 43.9L433 46.4L429.3 48.9Z" fill="#333" />
<path d="M446.3 38.3L453.7 31.1H462.2L459 38.3Z" fill="#efefef" />
<path d="M470.4 55.1L477.9 46.4V55.1L470.4 62.7Z" fill="#bcbcbc" />
<path d="M446.3 62.7V38.6H459.9Q470.4 39 470.4 49.1V62.7Z" fill="#d9d9d9" />
<path d="M458.2 37.9L464.6 31.1Q477 33 477.9 44.4L471.1 50.8Q469 39.5 458.2 37.9Z" fill="#6aaee6" />
<path d="M446.3 62.7V38.3L453.7 31.1H462.2M477.9 46.4V55.1L470.4 62.7H446.3" fill="none" stroke="#555" stroke-width="1.2" />
<path d="M489.4 38.6L496.5 31.1H520.7L513.5 38.6Z" fill="#efefef" />
<path d="M513.5 38.6L520.7 31.1V55.1L513.5 62.7Z" fill="#bcbcbc" />
<rect x="489.4" y="38.6" width="24.1" height="24.1" fill="#d9d9d9" />
<rect x="491.8" y="42" width="18.3" height="17" fill="#f7f7f7" />
<rect x="493.1" y="43.4" width="7.9" height="15.2" fill="#4a93cf" />
<path d="M493.1 58.6L501 51H509V58.6Z" fill="#8ecbf8" />
<path d="M489.4 62.7V38.6L496.5 31.1H520.7V55.1L513.5 62.7Z" fill="none" stroke="#555" stroke-width="1.2" />
<path d="M532.1 45.4L536.2 41.2H542.3V35.2L546.4 31.1H563.7L560 35.2V52.5L557 55.9H550.1V62.7H532.1Z" fill="#6aaee6" />
<path d="M532.1 45.4L536.2 41.2H542.3V45.4Z" fill="#8ecbf8" />
<path d="M542.3 35.2L546.4 31.1H563.7L560 35.2Z" fill="#8ecbf8" />
<path d="M560 35.2L563.7 31.1V49L560 52.5Z" fill="#4a93cf" />
<path d="M550.1 52.5H553.8V59L550.1 62.7Z" fill="#4a93cf" />
<path d="M577.3 37.2L583.0999999999999 31.400000000000002L604.8 31.400000000000002L599.0 37.2Z" fill="#8ecbf8" /><path d="M599.0 37.2L604.8 31.400000000000002L604.8 41.00000000000001L599.0 46.800000000000004Z" fill="#4a93cf" /><rect x="577.3" y="37.2" width="21.7" height="9.6" fill="#6aaee6" />
<path d="M575.3 49.5H599.4L606.8 42" fill="none" stroke="#1a8ae0" stroke-width="1.3" />
<path d="M599.4 51.9L604.8 46.4V55.9L599.4 61.4Z" fill="#bcbcbc" />
<rect x="577.3" y="51.9" width="22.1" height="9.5" fill="#d9d9d9" />
<path d="M577.3 51.9V61.4H599.4L604.8 55.9V46.4" fill="none" stroke="#555" stroke-width="1.2" />
<path d="M634 34V59.5M621.5 46.8H646.5" fill="none" stroke="#333" stroke-width="2.6" />
<path d="M629.2 38.6L634 31.4L638.8 38.6ZM629.2 55L634 62.2L638.8 55ZM625.6 42L618.4 46.8L625.6 51.6ZM642.4 42L649.6 46.8L642.4 51.6Z" fill="#333" />
<path d="M676.1 42.9L681 38.2H692.5L688 42.9Z" fill="#efefef" />
<path d="M688 42.9L692.5 38.2V55L688 60.3Z" fill="#bcbcbc" />
<rect x="676.1" y="42.9" width="11.9" height="17.4" fill="#d9d9d9" />
<path d="M676.1 60.3V42.9L678 41.3M686 35.2H701.8V52" fill="none" stroke="#555" stroke-width="1.1" />
<path d="M676.1 60.3H692M701.8 35.2V52" fill="none" stroke="#555" stroke-width="1.1" />
<rect x="672" y="35.5" width="8.6" height="3.7" fill="#1f88e5" />
<path d="M680.3 31.4L689.4 37.2L680.3 42.6Z" fill="#1f88e5" />
<path d="M689 61Q686.5 58 689.5 55L693.5 51Q696.5 49 699 51.5M694 52Q697 49 700 51.5L703 54" fill="none" stroke="#fff" stroke-width="4" />
<g fill="none" stroke="#333" stroke-width="1.8"><rect x="688.5" y="54.5" width="8" height="5" rx="2.5" transform="rotate(-40 692.5 57)"/><rect x="694.5" y="50" width="8" height="5" rx="2.5" transform="rotate(-40 698.5 52.5)"/></g>
<path d="M715.2 50.7L718.5 47.400000000000006L730.9 47.400000000000006L727.6 50.7Z" fill="#efefef" /><path d="M727.6 50.7L730.9 47.400000000000006L730.9 59.300000000000004L727.6 62.6Z" fill="#bcbcbc" /><rect x="715.2" y="50.7" width="12.4" height="11.9" fill="#d9d9d9" />
<path d="M727.6 50.7L730.9 47.400000000000006L742.4 47.400000000000006L739.1 50.7Z" fill="#efefef" /><path d="M739.1 50.7L742.4 47.400000000000006L742.4 59.300000000000004L739.1 62.6Z" fill="#bcbcbc" /><rect x="727.6" y="50.7" width="11.5" height="11.9" fill="#d9d9d9" />
<path d="M715.2 50.7V62.6H739.1L742.4 59.4V47.4H731M727.6 50.7V62.6" fill="none" stroke="#555" stroke-width="1.1" />
<path d="M715.2 39.6L718.5 36.300000000000004L730.9 36.300000000000004L727.6 39.6Z" fill="#8ecbf8" /><path d="M727.6 39.6L730.9 36.300000000000004L730.9 47.400000000000006L727.6 50.7Z" fill="#4a93cf" /><rect x="715.2" y="39.6" width="12.4" height="11.1" fill="#6aaee6" />
<rect x="730.3000000000001" y="35.650000000000006" width="17.6" height="6.1" fill="#f4f4f4" /><rect x="736.0500000000001" y="29.900000000000002" width="6.1" height="17.6" fill="#f4f4f4" /><rect x="731.3000000000001" y="36.650000000000006" width="15.6" height="4.1" fill="#1fae4b" /><rect x="737.0500000000001" y="30.900000000000002" width="4.1" height="15.6" fill="#1fae4b" />
<rect x="758.9" y="49.8" width="12.8" height="10.5" fill="none" stroke="#555" stroke-width="1.1" />
<rect x="772.6" y="33.2" width="1.2" height="27.6" fill="#d62b2b" />
<rect x="775.4" y="33.2" width="13.4" height="11.5" fill="#6aaee6" stroke="#4a93cf" stroke-width="0.6" />
<rect x="801.2" y="31.4" width="6.4" height="5.9" fill="#6aaee6" />
<rect x="801.2" y="37.3" width="6.4" height="6" fill="none" stroke="#555" stroke-width="1" />
<rect x="807.6" y="37.3" width="6" height="6" fill="none" stroke="#555" stroke-width="1" />
<path d="M806.2 45.1V60.8M806.2 48.4H814M806.2 53.4H814M806.2 58.5H814" fill="none" stroke="#888" stroke-width="1" />
<rect x="816.6" y="39.5" width="16" height="22.8" fill="#fff" stroke="#555" stroke-width="1.1" />
<rect x="816.3" y="39.2" width="16.6" height="2.8" fill="#555" />
<path d="M816.6 46.5H832.6M816.6 51H832.6M816.6 55.5H832.6M816.6 60H832.6M821.5 42V62.3" fill="none" stroke="#777" stroke-width="0.9" />
<path d="M858.3 58.9V37.9L864.8 31.4H885.9V58.9Z" fill="#ececec" stroke="#c4c4c4" stroke-width="1" />
<path d="M876.2 53.9H890M876.2 59.9H890M886 56.5V62.5" fill="none" stroke="#b5b5b5" stroke-width="1.6" />
<rect x="879.2" y="51.3" width="1.3" height="5.2" fill="#7fc2f2" />
<circle cx="882.2" cy="38.7" r="7.8" fill="#1f88e5"/>
<path d="M882.3 33.2L885.2 37.3H883.3Q883.5 41.5 880.6 44Q881.3 40.5 881.2 37.3H879.4Z" fill="#fff" />
<rect x="901.5" y="31.4" width="29" height="28" fill="#f4f4f4" stroke="#c4c4c4" stroke-width="1" />
<rect x="901.5" y="31.4" width="29" height="4.5" fill="#c4c4c4" />
<path d="M905.5 40.5H921M905.5 45.5H921M905.5 51H918M905.5 40.5V56M910.8 40.5V56M916 40.5V56" fill="none" stroke="#c4c4c4" stroke-width="1" />
<path d="M919 53.9H933M919 59.9H933M929 56.5V62.5" fill="none" stroke="#b5b5b5" stroke-width="1.6" />
<rect x="922" y="51.3" width="1.3" height="5.2" fill="#7fc2f2" />
<circle cx="924.9" cy="38.7" r="7.8" fill="#1f88e5"/>
<path d="M925 33.2L927.9 37.3H926Q926.2 41.5 923.3 44Q924 40.5 923.9 37.3H922.1Z" fill="#fff" />
<path d="M984.3 61.2V40.1L992.5 32H993V61.2Z" fill="#d9d9d9" />
<path d="M993 40.1L1001.7 31.8V53L993 61.2Z" fill="#5ac47a" stroke="#3a8f55" stroke-width="0.7" />
<path d="M1005.4 40.1L1013.7 31.8V53.4L1005.4 61.2Z" fill="#e89a60" stroke="#b97040" stroke-width="0.7" />
<path d="M992 61.2H984.3V40.1L993.4 31.4H999.9" fill="none" stroke="#555" stroke-width="1.2" />
<rect x="1079.2" y="48.6" width="27.7" height="6" fill="#f5a623" />
<path d="M1082 48.6V51M1085.5 48.6V50.3M1089 48.6V51M1092.5 48.6V50.3M1096 48.6V51M1099.5 48.6V50.3M1103 48.6V51" fill="none" stroke="#8a5a10" stroke-width="0.8" />
<path d="M1079.6 39V47.4M1106.5 39V47.4M1081 43.2H1105" fill="none" stroke="#555" stroke-width="1.1" />
<path d="M1080.5 43.2L1084 41V45.4ZM1105.5 43.2L1102 41V45.4Z" fill="#555" />
<rect x="1153.1" y="39.6" width="13.2" height="23" fill="#7db8e8" />
<path d="M1153.1 42H1166.3M1153.1 44.8H1166.3M1153.1 47.6H1166.3M1153.1 50.4H1166.3M1153.1 53.2H1166.3M1153.1 56H1166.3M1153.1 58.8H1166.3" fill="none" stroke="#5a9ad6" stroke-width="0.8" />
<rect x="1148.3" y="32.4" width="23.4" height="7.2" rx="1.5" fill="#6aaee6"/>
<rect x="1150" y="32.6" width="7" height="6.8" fill="#8ecbf8" />
<rect x="1164" y="32.6" width="7.5" height="6.8" fill="#4a93cf" />
<rect x="1163.1499999999999" y="52.8" width="15.9" height="6.0" fill="#f4f4f4" /><rect x="1168.1" y="47.849999999999994" width="6.0" height="15.9" fill="#f4f4f4" /><rect x="1164.1499999999999" y="53.8" width="13.9" height="4.0" fill="#1fae4b" /><rect x="1169.1" y="48.849999999999994" width="4.0" height="13.9" fill="#1fae4b" />
<rect x="1190.4" y="32.4" width="28.2" height="28.2" fill="#8ccbff" stroke="#4a93cf" stroke-width="0.8" />
<path d="M1190.8 60.2V48Q1196 40 1201 45.5Q1206 51 1208.5 53Q1213 47 1218.2 52.5V60.2Z" fill="#3f8fd0" />
<circle cx="1210.8" cy="39.9" r="3" fill="#f8f3c0"/>
<rect x="1249.7" y="28.1" width="38.6" height="38" rx="2" fill="#dcecf8" stroke="#aed6f1" stroke-width="1.2"/>
<rect x="1253.5" y="31.4" width="27" height="21.2" fill="none" stroke="#2db050" stroke-width="1.1" stroke-dasharray="3 2"/>
<path d="M1275 46.5V60L1278 57.3L1280.6 62.3L1282.8 61.2L1280.4 56.2H1284.4Z" fill="#fff" stroke="#333" stroke-width="1" />
<path d="M7.5 105.3L11.3 102.5V108.1ZM11.3 105.3L15 102.5V108.1Z" fill="#777" />
<rect x="280" y="104.5" width="8" height="1.4" fill="#555" />
<path d="M18.8 131L22.8 135L26.8 131" fill="none" stroke="#333" stroke-width="1.1" />
<path d="M39.9 132.9Q47.9 122.4 55.9 132.9Q47.9 143.4 39.9 132.9Z" fill="#777" /><circle cx="47.9" cy="132.9" r="3" fill="#777" stroke="#f4f4f4" stroke-width="1.4"/>
<path d="M66 128.6L68.8 125.9H80L77.2 128.6Z" fill="#8ecbf8" />
<path d="M77.2 128.6L80 125.9V137.2L77.2 139.9Z" fill="#4a93cf" />
<rect x="66" y="128.6" width="11.2" height="11.3" fill="#6aaee6" />
<circle cx="174.5" cy="133" r="5.6" fill="none" stroke="#333" stroke-width="1.2"/><circle cx="174.5" cy="133" r="2.4" fill="#333"/>
<path d="M73.76 155.05L73.76 158.95L71.28 159.19L71.23 159.33L72.81 161.25L70.05 164.01L68.13 162.43L67.99 162.48L67.75 164.96L63.85 164.96L63.61 162.48L63.47 162.43L61.55 164.01L58.79 161.25L60.37 159.33L60.32 159.19L57.84 158.95L57.84 155.05L60.32 154.81L60.37 154.67L58.79 152.75L61.55 149.99L63.47 151.57L63.61 151.52L63.85 149.04L67.75 149.04L67.99 151.52L68.13 151.57L70.05 149.99L72.81 152.75L71.23 154.67L71.28 154.81Z" fill="#777" /><circle cx="65.8" cy="157" r="3.3" fill="#f4f4f4"/>
<path d="M39.3 153.2L43.3 157.0L39.3 160.79999999999998" fill="none" stroke="#333" stroke-width="1.1" />
<path d="M39.3 177.2L43.3 181.0L39.3 184.79999999999998" fill="none" stroke="#333" stroke-width="1.1" />
<path d="M58.3 187.2V174.7H64.3L65.3 176.7H73.3V187.2Z" fill="#f8f8f8" stroke="#666" stroke-width="1.1" /><path d="M58.9 175.29999999999998H63.9L64.7 176.7H58.9Z" fill="#c8c8c8" />
<path d="M39.3 201.2L43.3 205.0L39.3 208.79999999999998" fill="none" stroke="#333" stroke-width="1.1" />
<path d="M58.2 205.2Q66 195.7 73.8 205.2Q66 214.7 58.2 205.2Z" fill="none" stroke="#888" stroke-width="1" /><circle cx="66" cy="205.2" r="2.8" fill="none" stroke="#888" stroke-width="1"/><path d="M61.5 199.6L71.5 210.79999999999998" fill="none" stroke="#888" stroke-width="1" />
<path d="M83 211.0V198.5H89L90 200.5H98V211.0Z" fill="#f8f8f8" stroke="#666" stroke-width="1.1" /><path d="M83.6 199.1H88.6L89.4 200.5H83.6Z" fill="#c8c8c8" />
<path d="M36.8 227.2L40.8 231.2L44.8 227.2" fill="none" stroke="#333" stroke-width="1.1" />
<path d="M58 229.1Q66 218.6 74 229.1Q66 239.6 58 229.1Z" fill="#777" /><circle cx="66" cy="229.1" r="3" fill="#777" stroke="#f4f4f4" stroke-width="1.4"/>
<path d="M83 235.0V222.5H89L90 224.5H98V235.0Z" fill="#f8f8f8" stroke="#666" stroke-width="1.1" /><path d="M83.6 223.1H88.6L89.4 224.5H83.6Z" fill="#c8c8c8" />
<path d="M80.0 237.6L83.2 234.4" fill="none" stroke="#1a8ad4" stroke-width="1.6" /><path d="M86.1 237.6L89.3 234.4" fill="none" stroke="#1a8ad4" stroke-width="1.6" /><path d="M92.2 237.6L95.4 234.4" fill="none" stroke="#1a8ad4" stroke-width="1.6" /><path d="M98.3 237.6L101.5 234.4" fill="none" stroke="#1a8ad4" stroke-width="1.6" /><path d="M104.4 237.6L107.6 234.4" fill="none" stroke="#1a8ad4" stroke-width="1.6" /><path d="M110.5 237.6L113.7 234.4" fill="none" stroke="#1a8ad4" stroke-width="1.6" /><path d="M116.6 237.6L119.8 234.4" fill="none" stroke="#1a8ad4" stroke-width="1.6" /><path d="M122.7 237.6L125.9 234.4" fill="none" stroke="#1a8ad4" stroke-width="1.6" /><path d="M128.8 237.6L132.0 234.4" fill="none" stroke="#1a8ad4" stroke-width="1.6" /><path d="M134.9 237.6L138.1 234.4" fill="none" stroke="#1a8ad4" stroke-width="1.6" /><path d="M141.0 237.6L144.2 234.4" fill="none" stroke="#1a8ad4" stroke-width="1.6" /><path d="M147.1 237.6L150.3 234.4" fill="none" stroke="#1a8ad4" stroke-width="1.6" /><path d="M153.2 237.6L156.4 234.4" fill="none" stroke="#1a8ad4" stroke-width="1.6" /><path d="M159.3 237.6L162.5 234.4" fill="none" stroke="#1a8ad4" stroke-width="1.6" />
<path d="M76 253Q84 242.5 92 253Q84 263.5 76 253Z" fill="#777" /><circle cx="84" cy="253" r="3" fill="#777" stroke="#f4f4f4" stroke-width="1.4"/>
<path d="M101.8 248.5V257.5Q108.7 261 115.6 257.5V248.5Z" fill="#6aaee6" />
<ellipse cx="108.7" cy="248.3" rx="6.9" ry="2.4" fill="#8ecbf8" stroke="#5a9ad6" stroke-width="0.5"/>
<path d="M97.5 261.6L100.7 258.4" fill="none" stroke="#1a8ad4" stroke-width="1.6" /><path d="M103.6 261.6L106.8 258.4" fill="none" stroke="#1a8ad4" stroke-width="1.6" /><path d="M109.7 261.6L112.9 258.4" fill="none" stroke="#1a8ad4" stroke-width="1.6" /><path d="M115.8 261.6L119.0 258.4" fill="none" stroke="#1a8ad4" stroke-width="1.6" /><path d="M121.9 261.6L125.1 258.4" fill="none" stroke="#1a8ad4" stroke-width="1.6" /><path d="M128.0 261.6L131.2 258.4" fill="none" stroke="#1a8ad4" stroke-width="1.6" /><path d="M134.1 261.6L137.3 258.4" fill="none" stroke="#1a8ad4" stroke-width="1.6" /><path d="M140.2 261.6L143.4 258.4" fill="none" stroke="#1a8ad4" stroke-width="1.6" /><path d="M146.3 261.6L149.5 258.4" fill="none" stroke="#1a8ad4" stroke-width="1.6" /><path d="M152.4 261.6L155.6 258.4" fill="none" stroke="#1a8ad4" stroke-width="1.6" /><path d="M158.5 261.6L161.7 258.4" fill="none" stroke="#1a8ad4" stroke-width="1.6" /><path d="M164.6 261.6L167.8 258.4" fill="none" stroke="#1a8ad4" stroke-width="1.6" /><path d="M170.7 261.6L173.9 258.4" fill="none" stroke="#1a8ad4" stroke-width="1.6" />
<path d="M39.3 273.2L43.3 277.0L39.3 280.8" fill="none" stroke="#333" stroke-width="1.1" />
<path d="M58.2 277.2Q66 267.7 73.8 277.2Q66 286.7 58.2 277.2Z" fill="none" stroke="#888" stroke-width="1" /><circle cx="66" cy="277.2" r="2.8" fill="none" stroke="#888" stroke-width="1"/><path d="M61.5 271.59999999999997L71.5 282.8" fill="none" stroke="#888" stroke-width="1" />
<path d="M83 283.0V270.5H89L90 272.5H98V283.0Z" fill="#f8f8f8" stroke="#666" stroke-width="1.1" /><path d="M83.6 271.1H88.6L89.4 272.5H83.6Z" fill="#c8c8c8" />
<path d="M831.5 97.2L840.2 112H822.8Z" fill="#f7a21b" stroke="#f7a21b" stroke-width="1.2" stroke-linejoin="round"/>
<path d="M831.5 101.5V107.3M831.5 108.6V110.2" stroke="#fff" stroke-width="1.7"/>
<path d="M279.9 922.2H288.3M284.1 918.1V926.3" stroke="#666" stroke-width="1.8"/>
<path d="M848.9 912V915.9M848.9 917.2V921.2M848.9 922.5V928.9" fill="none" stroke="#6ab4ee" stroke-width="1.9" />
<path d="M851.5 916.9Q848.9 916.5 846 916.8Q840.9 917.6 840.9 920.1Q840.9 923.5 848.9 923.5Q856.9 923.5 856.9 920.1Q856.9 918.6 854.6 917.6" fill="none" stroke="#333" stroke-width="1.3" />
<path d="M852.1 916.2L855.6 916.7L853.2 918.9Z" fill="#333" />
<path d="M863 919H868.9L866 922.6Z" fill="#666" />
<path d="M876.8 917L880.9 912.3V916.8M882.3 916.6L887.5 914.3V917" fill="none" stroke="#555" stroke-width="1.1" />
<rect x="876.6" y="917.3" width="13.9" height="10.1" fill="#f4f4f4" stroke="#555" stroke-width="1.3" />
<rect x="878.1" y="919.2" width="10.9" height="6.5" fill="#5aabe8" />
<path d="M903.8 927.8Q900.5 924.5 901.8 921.6Q901.6 921.3 902.3 921.4L905.2 923.5L904.5 914.3Q904.6 912.5 905.8 914L907.3 921M907.3 921L907.2 912.4Q907.6 911 908.8 912.3L909.8 920.5M909.8 920.5L910.6 913.3Q911.3 912.3 912.1 913.5L912 921M912 921L914.2 916.3Q915.3 915.8 915.5 917L913.1 924.2Q912.8 927.4 911.6 928.5H904.8Q904.2 928.3 903.8 927.8" fill="none" stroke="#666" stroke-width="0.9" />
<circle cx="932.2" cy="920.4" r="4.9" fill="#e0e0e0" stroke="#444" stroke-width="1.2"/>
<path d="M935.9 924.4L939.9 928.4" fill="none" stroke="#8a6a3a" stroke-width="1.8" />
<path d="M939 915.7H943.6M941.3 913V918.2M939 919H943.6" fill="none" stroke="#444" stroke-width="1.0" />
<rect x="953.4" y="912.4" width="16.3" height="16.3" fill="none" stroke="#333" stroke-width="1.1" stroke-dasharray="2.6 1.5"/>
<circle cx="960" cy="918.8" r="6.5" fill="#e0e0e0" stroke="#555" stroke-width="1.3"/>
<path d="M965.2 924.3L969.4 928.4" fill="none" stroke="#8a6a3a" stroke-width="1.8" />
<path d="M975 919.2H981L978 922.8Z" fill="#666" />
<rect x="987.6" y="914.6" width="15" height="11" fill="#f2f2f2" stroke="#555" stroke-width="1.3" />
<rect x="989.9" y="916.6" width="10.4" height="6.8" fill="#a9a9a9" stroke="#cacaca" stroke-width="0.8" />
<path d="M990.2 927.5H1000M995.1 925.8V927.5" fill="none" stroke="#555" stroke-width="1.3" />
<path d="M1006.5 919.2H1012L1009.2 922.8Z" fill="#666" />
<rect x="1018.6" y="913" width="12.6" height="12.4" fill="#f4f4f4" stroke="#555" stroke-width="1.1" />
<path d="M1022.8 913V925.4M1027 913V925.4M1018.6 917.2H1031.2M1018.6 921.3H1031.2" fill="none" stroke="#555" stroke-width="1.1" />
<path d="M1037.5 919.2H1043.2L1040.3 922.8Z" fill="#666" />
<rect x="1049.4" y="913.6" width="14.8" height="12.8" fill="#f4f4f4" stroke="#555" stroke-width="1.3" />
<path d="M1056.8 913.6V926.4M1049.4 920H1064.2" fill="none" stroke="#999" stroke-width="1.4" />
<rect x="1051.6" y="915.6" width="3.4" height="2.6" fill="#d0d0d0" stroke="#aaa" stroke-width="0.6" />
<rect x="1058.6" y="915.6" width="3.4" height="2.6" fill="#d0d0d0" stroke="#aaa" stroke-width="0.6" />
<rect x="1051.6" y="921.9" width="3.4" height="2.6" fill="#d0d0d0" stroke="#aaa" stroke-width="0.6" />
<rect x="1058.6" y="921.9" width="3.4" height="2.6" fill="#d0d0d0" stroke="#aaa" stroke-width="0.6" />
<path d="M1068.8 919.2H1074.2L1071.5 922.8Z" fill="#666" />
<rect x="8" y="958" width="1.8" height="12" fill="#808080" /><path d="M10.5 964L18.7 958.3V969.7Z" fill="#808080" />
<path d="M32.4 964L41.8 958V970Z" fill="#808080" /><rect x="43.2" y="962.2" width="1.8" height="4.8" fill="#808080" />
<path d="M58.2 956.1L69.9 963.4L58.2 970.7Z" fill="#808080" />
<rect x="82.2" y="962.1" width="1.7" height="4.6" fill="#808080" /><path d="M85.1 958.2L94.5 963.8L85.1 969.7Z" fill="#808080" />
<path d="M108.1 958.6L116.5 963.8L108.1 969.5Z" fill="#808080" /><rect x="117.1" y="958.2" width="1.9" height="11.5" fill="#808080" />
<rect x="151" y="978.6" width="361" height="2" fill="#c4c4c4" />
<rect x="151.1" y="974" width="1.8" height="5" fill="#c4c4c4" />
<rect x="174.1" y="974" width="1.8" height="5" fill="#c4c4c4" />
<rect x="198.1" y="974" width="1.8" height="5" fill="#c4c4c4" />
<rect x="222.1" y="974" width="1.8" height="5" fill="#c4c4c4" />
<rect x="246.1" y="974" width="1.8" height="5" fill="#c4c4c4" />
<rect x="270.1" y="974" width="1.8" height="5" fill="#c4c4c4" />
<rect x="294.1" y="974" width="1.8" height="5" fill="#c4c4c4" />
<rect x="318.1" y="974" width="1.8" height="5" fill="#c4c4c4" />
<rect x="342.1" y="974" width="1.8" height="5" fill="#c4c4c4" />
<rect x="366.1" y="974" width="1.8" height="5" fill="#c4c4c4" />
<rect x="390.1" y="974" width="1.8" height="5" fill="#c4c4c4" />
<rect x="414.1" y="974" width="1.8" height="5" fill="#c4c4c4" />
<rect x="438.1" y="974" width="1.8" height="5" fill="#c4c4c4" />
<rect x="462.1" y="974" width="1.8" height="5" fill="#c4c4c4" />
<rect x="486.1" y="974" width="1.8" height="5" fill="#c4c4c4" />
<rect x="510.1" y="974" width="1.8" height="5" fill="#c4c4c4" />
<rect x="144.3" y="956.2" width="12.6" height="12.4" fill="none" stroke="#444" stroke-width="0.9" />
<rect x="142.60000000000002" y="954.5" width="2.4" height="2.4" fill="#1a8ae0" />
<rect x="155.70000000000002" y="954.5" width="2.4" height="2.4" fill="#1a8ae0" />
<rect x="142.60000000000002" y="967.5" width="2.4" height="2.4" fill="#1a8ae0" />
<path d="M152.2 969.8L158 964" fill="none" stroke="#f5a623" stroke-width="2.6" />
<circle cx="157.8" cy="964.2" r="1.2" fill="#e83e3e"/>
<path d="M167.5 967.7H176.5L179.0 965.3V968L176.5 970.3H167.5Z" fill="#bdbdbd" /><path d="M167.5 957.8L169.9 955.4L178.9 955.4L176.5 957.8Z" fill="#8ecbf8" /><path d="M176.5 957.8L178.9 955.4L178.9 965.3L176.5 967.6999999999999Z" fill="#4a93cf" /><rect x="167.5" y="957.8" width="9" height="9.9" fill="#6aaee6" /><path d="M181.7 967.7V957.5" fill="none" stroke="#222" stroke-width="1.1" /><path d="M180.3 958.5L181.7 955.8L183.1 958.5Z" fill="#222" />
<path d="M191.5 967.7H200.5L203.0 965.3V968L200.5 970.3H191.5Z" fill="#bdbdbd" /><path d="M191.5 957.8L193.9 955.4L202.9 955.4L200.5 957.8Z" fill="#8ecbf8" /><path d="M200.5 957.8L202.9 955.4L202.9 965.3L200.5 967.6999999999999Z" fill="#4a93cf" /><rect x="191.5" y="957.8" width="9" height="9.9" fill="#6aaee6" /><path d="M205.7 967.7V957.5" fill="none" stroke="#222" stroke-width="1.1" /><path d="M204.3 958.5L205.7 955.8L207.1 958.5Z" fill="#222" />
<path d="M215.5 967.7H224.5L227.0 965.3V968L224.5 970.3H215.5Z" fill="#bdbdbd" /><path d="M215.5 957.8L217.9 955.4L226.9 955.4L224.5 957.8Z" fill="#8ecbf8" /><path d="M224.5 957.8L226.9 955.4L226.9 965.3L224.5 967.6999999999999Z" fill="#4a93cf" /><rect x="215.5" y="957.8" width="9" height="9.9" fill="#6aaee6" /><path d="M229.7 967.7V957.5" fill="none" stroke="#222" stroke-width="1.1" /><path d="M228.3 958.5L229.7 955.8L231.1 958.5Z" fill="#222" />
<path d="M239.2 970.8V958.3L242.2 955.3H246.2Q254.2 956 254.7 964V967.5L251.7 970.8Z" fill="#d9d9d9" stroke="#555" stroke-width="1" /><path d="M246.39999999999998 955.6Q253.89999999999998 957 254.79999999999998 964.2L252.7 965.8Q251.7 959.5 245.2 958Z" fill="#6aaee6" /><path d="M251.7 970.8V967L254.7 964.5V967.5Z" fill="#bcbcbc" />
<path d="M263.2 970.8V958.3L266.2 955.3H270.2Q278.2 956 278.7 964V967.5L275.7 970.8Z" fill="#d9d9d9" stroke="#555" stroke-width="1" /><path d="M270.4 955.6Q277.9 957 278.8 964.2L276.7 965.8Q275.7 959.5 269.2 958Z" fill="#6aaee6" /><path d="M275.7 970.8V967L278.7 964.5V967.5Z" fill="#bcbcbc" />
<path d="M287.2 970.8V958.3L290.2 955.3H294.2Q302.2 956 302.7 964V967.5L299.7 970.8Z" fill="#d9d9d9" stroke="#555" stroke-width="1" /><path d="M294.4 955.6Q301.9 957 302.8 964.2L300.7 965.8Q299.7 959.5 293.2 958Z" fill="#6aaee6" /><path d="M299.7 970.8V967L302.7 964.5V967.5Z" fill="#bcbcbc" />
<path d="M311.2 970.8V958.3L314.2 955.3H318.2Q326.2 956 326.7 964V967.5L323.7 970.8Z" fill="#d9d9d9" stroke="#555" stroke-width="1" /><path d="M318.4 955.6Q325.9 957 326.8 964.2L324.7 965.8Q323.7 959.5 317.2 958Z" fill="#6aaee6" /><path d="M323.7 970.8V967L326.7 964.5V967.5Z" fill="#bcbcbc" />
<path d="M342.7 956.5V968.5M336.7 962.5H348.7" fill="none" stroke="#222" stroke-width="1.5" /><path d="M340.4 958.3L342.7 955L345.0 958.3ZM340.4 966.7L342.7 970L345.0 966.7ZM338.9 960.2L335.7 962.5L338.9 964.8ZM346.5 960.2L349.7 962.5L346.5 964.8Z" fill="#222" />
<path d="M366.7 956.5V968.5M360.7 962.5H372.7" fill="none" stroke="#222" stroke-width="1.5" /><path d="M364.4 958.3L366.7 955L369.0 958.3ZM364.4 966.7L366.7 970L369.0 966.7ZM362.9 960.2L359.7 962.5L362.9 964.8ZM370.5 960.2L373.7 962.5L370.5 964.8Z" fill="#222" />
<path d="M383.5 967.7H392.5L395.0 965.3V968L392.5 970.3H383.5Z" fill="#bdbdbd" /><path d="M383.5 957.8L385.9 955.4L394.9 955.4L392.5 957.8Z" fill="#8ecbf8" /><path d="M392.5 957.8L394.9 955.4L394.9 965.3L392.5 967.6999999999999Z" fill="#4a93cf" /><rect x="383.5" y="957.8" width="9" height="9.9" fill="#6aaee6" /><path d="M397.7 967.7V957.5" fill="none" stroke="#222" stroke-width="1.1" /><path d="M396.3 958.5L397.7 955.8L399.1 958.5Z" fill="#222" />
<path d="M407.5 967.7H416.5L419.0 965.3V968L416.5 970.3H407.5Z" fill="#bdbdbd" /><path d="M407.5 957.8L409.9 955.4L418.9 955.4L416.5 957.8Z" fill="#8ecbf8" /><path d="M416.5 957.8L418.9 955.4L418.9 965.3L416.5 967.6999999999999Z" fill="#4a93cf" /><rect x="407.5" y="957.8" width="9" height="9.9" fill="#6aaee6" /><path d="M421.7 967.7V957.5" fill="none" stroke="#222" stroke-width="1.1" /><path d="M420.3 958.5L421.7 955.8L423.1 958.5Z" fill="#222" />
<path d="M431.5 967.7H440.5L443.0 965.3V968L440.5 970.3H431.5Z" fill="#bdbdbd" /><path d="M431.5 957.8L433.9 955.4L442.9 955.4L440.5 957.8Z" fill="#8ecbf8" /><path d="M440.5 957.8L442.9 955.4L442.9 965.3L440.5 967.6999999999999Z" fill="#4a93cf" /><rect x="431.5" y="957.8" width="9" height="9.9" fill="#6aaee6" /><path d="M445.7 967.7V957.5" fill="none" stroke="#222" stroke-width="1.1" /><path d="M444.3 958.5L445.7 955.8L447.1 958.5Z" fill="#222" />
<path d="M455.5 967.7H464.5L467.0 965.3V968L464.5 970.3H455.5Z" fill="#bdbdbd" /><path d="M455.5 957.8L457.9 955.4L466.9 955.4L464.5 957.8Z" fill="#8ecbf8" /><path d="M464.5 957.8L466.9 955.4L466.9 965.3L464.5 967.6999999999999Z" fill="#4a93cf" /><rect x="455.5" y="957.8" width="9" height="9.9" fill="#6aaee6" /><path d="M469.7 967.7V957.5" fill="none" stroke="#222" stroke-width="1.1" /><path d="M468.3 958.5L469.7 955.8L471.1 958.5Z" fill="#222" />
<path d="M479.5 967.7H488.5L491.0 965.3V968L488.5 970.3H479.5Z" fill="#bdbdbd" /><path d="M479.5 957.8L481.9 955.4L490.9 955.4L488.5 957.8Z" fill="#8ecbf8" /><path d="M488.5 957.8L490.9 955.4L490.9 965.3L488.5 967.6999999999999Z" fill="#4a93cf" /><rect x="479.5" y="957.8" width="9" height="9.9" fill="#6aaee6" /><path d="M493.7 967.7V957.5" fill="none" stroke="#222" stroke-width="1.1" /><path d="M492.3 958.5L493.7 955.8L495.1 958.5Z" fill="#222" />
<path d="M503.5 967.7H512.5L515.0 965.3V968L512.5 970.3H503.5Z" fill="#bdbdbd" /><path d="M503.5 957.8L505.9 955.4L514.9 955.4L512.5 957.8Z" fill="#8ecbf8" /><path d="M512.5 957.8L514.9 955.4L514.9 965.3L512.5 967.6999999999999Z" fill="#4a93cf" /><rect x="503.5" y="957.8" width="9" height="9.9" fill="#6aaee6" /><path d="M517.7 967.7V957.5" fill="none" stroke="#222" stroke-width="1.1" /><path d="M516.3 958.5L517.7 955.8L519.1 958.5Z" fill="#222" />
<path d="M432 950L434.8 946M436.8 950L439.6 946M441.6 950L444.4 946" fill="none" stroke="#6ec6f0" stroke-width="1.6" />
<path d="M517 949H529V951.5L524.2 956.5V981H521.8V956.5L517 951.5Z" fill="#3a3a3a" />
<path d="M1903.76 961.95L1903.76 965.85L1901.28 966.09L1900.44 967.55L1901.47 969.82L1898.09 971.77L1896.64 969.74L1894.96 969.74L1893.51 971.77L1890.13 969.82L1891.16 967.55L1890.32 966.09L1887.84 965.85L1887.84 961.95L1890.32 961.71L1891.16 960.25L1890.13 957.98L1893.51 956.03L1894.96 958.06L1896.64 958.06L1898.09 956.03L1901.47 957.98L1900.44 960.25L1901.28 961.71Z" fill="#777" /><circle cx="1895.8" cy="963.9" r="3.2" fill="#f4f4f4"/>
<defs><radialGradient id="vcs" cx="0.5" cy="0.5" r="0.5"><stop offset="0" stop-color="#000" stop-opacity="0.18"/><stop offset="1" stop-color="#000" stop-opacity="0"/></radialGradient></defs>
<ellipse cx="1858" cy="178" rx="36" ry="18" fill="url(#vcs)"/>
<path d="M1823.2 160.6L1876.2 169.8L1872.6 185L1826.9 179.5Z" fill="#ececec" fill-opacity="0.9"/>
<path d="M1833 116.2L1882.3 123.5L1876.2 169.8L1823.2 160.6Z" fill="#f0f0f0" fill-opacity="0.9"/>
<path d="M1833 116.2L1882.3 123.5L1876.2 169.8L1823.2 160.6ZM1823.2 160.6L1826.9 179.5L1872.6 185L1876.2 169.8" fill="none" stroke="#555" stroke-width="0.75" stroke-dasharray="2.6 1.6"/>
<g transform="translate(1854 141) rotate(8) skewX(-9)"><text x="0" y="5.2" text-anchor="middle" font-family="Liberation Sans" font-size="12.5" font-weight="bold" fill="#8c9096" textLength="21" lengthAdjust="spacingAndGlyphs">TOP</text></g>
<g transform="translate(1850 174) rotate(7) scale(1 0.75)"><text x="0" y="4" text-anchor="middle" font-family="Liberation Sans" font-size="9" font-weight="bold" fill="#9a9a9a" textLength="34" lengthAdjust="spacingAndGlyphs">FRONT</text></g>
<path d="M1826.9 179.5L1821.6 158.5" fill="none" stroke="#3030e0" stroke-width="1.8" />
<path d="M1826.9 179.5L1880 187.4" fill="none" stroke="#f07070" stroke-width="1.8" />
<text x="1815" y="158.8" font-family="Liberation Sans" font-size="12" fill="#5a5af0">Z</text>
<text x="1882" y="193.5" font-family="Liberation Sans" font-size="12" fill="#f07a7a">X</text>
</svg>

</body></html>
